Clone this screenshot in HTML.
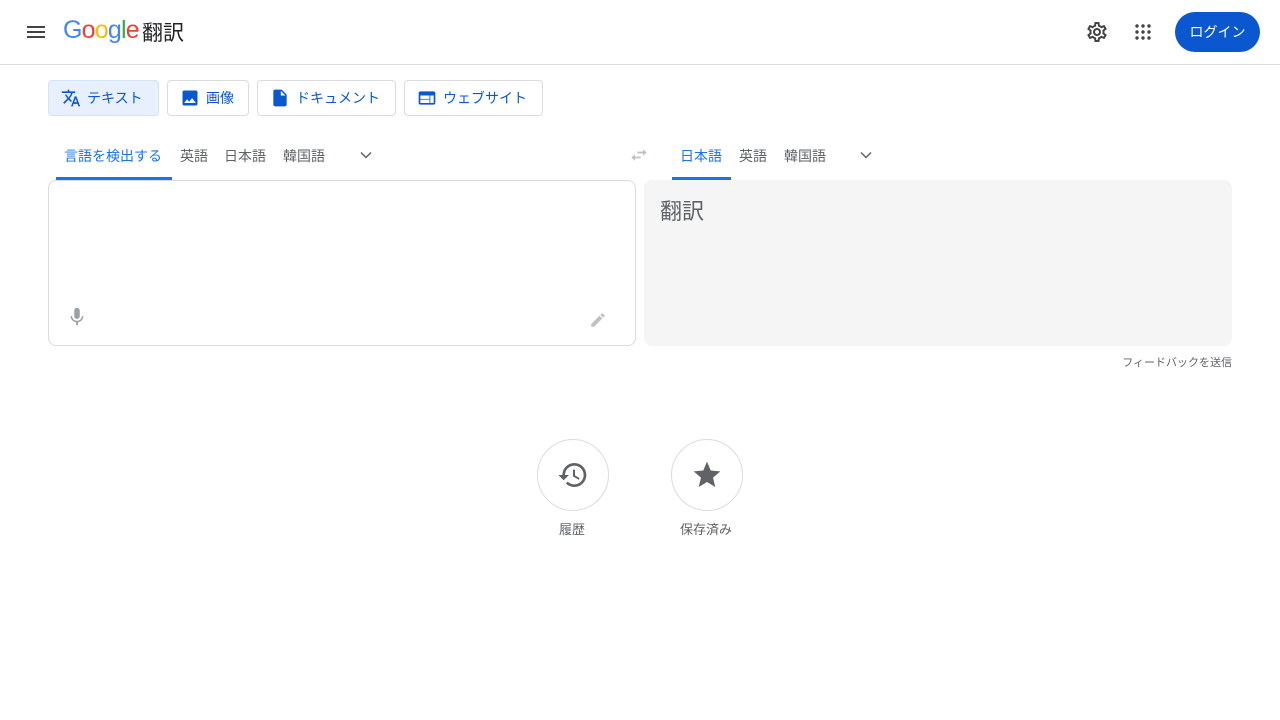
<!DOCTYPE html>
<html><head><meta charset="utf-8"><style>
*{box-sizing:border-box;margin:0;padding:0}
body{width:1280px;height:720px;background:#fff;font-family:"Liberation Sans","Noto Sans CJK JP",sans-serif;position:relative;overflow:hidden;color:#3c4043}
.abs{position:absolute}
.hdr{position:absolute;left:0;top:0;width:1280px;height:65px;border-bottom:1px solid #dadce0}
.btn{position:absolute;top:80px;height:36px;border:1px solid #dadce0;border-radius:4px;font-size:14px;color:#0b57d0;display:flex;align-items:center;padding-left:12px;gap:6px}
.tab{position:absolute;top:146px;font-size:14px;color:#5f6368}
.blue{color:#1a73e8}
</style></head><body>
<div class="hdr">
  <svg class="abs" style="left:24px;top:20px" width="24" height="24" viewBox="0 0 24 24"><path d="M3 18h18v-2H3v2zm0-5h18v-2H3v2zm0-7v2h18V6H3z" fill="#444"/></svg>
  <div class="abs" style="left:63px;top:16px;font-size:25px;letter-spacing:-0.8px;font-family:'Liberation Sans',sans-serif"><span style="color:#4285f4">G</span><span style="color:#ea4335">o</span><span style="color:#fbbc05">o</span><span style="color:#4285f4">g</span><span style="color:#34a853">l</span><span style="color:#ea4335">e</span></div>
  <div class="abs" style="left:142px;top:17px;font-size:21px;color:#202124">翻訳</div>
  <svg class="abs" style="left:1085px;top:20px" width="24" height="24" viewBox="0 0 24 24"><path fill="#444" d="M19.43 12.98c.04-.32.07-.64.07-.98 0-.34-.03-.66-.07-.98l2.11-1.65c.19-.15.24-.42.12-.64l-2-3.46a.5.5 0 0 0-.61-.22l-2.49 1c-.52-.4-1.08-.73-1.690-.98l-.38-2.65A.49.49 0 0 0 14 2h-4c-.25 0-.46.18-.49.42l-.38 2.65c-.61.25-1.17.59-1.69.98l-2.49-1a.57.57 0 0 0-.18-.03c-.17 0-.34.09-.43.25l-2 3.46c-.13.22-.07.49.12.64l2.11 1.65c-.04.32-.07.65-.07.98s.03.66.07.98l-2.11 1.65c-.19.15-.24.42-.12.64l2 3.46a.5.5 0 0 0 .61.22l2.49-1c.52.4 1.08.73 1.69.98l.38 2.65c.03.24.24.42.49.42h4c.25 0 .46-.18.49-.42l.38-2.65c.61-.25 1.17-.59 1.69-.98l2.49 1c.06.02.12.03.18.03.17 0 .34-.09.43-.25l2-3.46c.12-.22.07-.49-.12-.64l-2.11-1.65zm-1.98-1.71c.04.31.05.52.05.73 0 .21-.02.43-.05.73l-.14 1.13.89.7 1.08.84-.7 1.21-1.27-.51-1.04-.42-.9.68c-.43.32-.84.56-1.25.73l-1.06.43-.16 1.13-.2 1.35h-1.4l-.19-1.35-.16-1.13-1.06-.43c-.43-.18-.83-.41-1.23-.71l-.91-.7-1.06.43-1.27.51-.7-1.21 1.08-.84.89-.7-.14-1.13c-.03-.31-.05-.54-.05-.74s.02-.43.05-.73l.14-1.13-.89-.7-1.08-.84.7-1.21 1.27.51 1.04.42.9-.68c.43-.32.84-.56 1.25-.73l1.06-.43.16-1.13.2-1.35h1.39l.19 1.35.16 1.13 1.06.43c.43.18.83.41 1.23.71l.91.7 1.06-.43 1.27-.51.7 1.21-1.07.85-.89.7.14 1.13zM12 8c-2.21 0-4 1.790-4 4s1.79 4 4 4 4-1.79 4-4-1.79-4-4-4zm0 6c-1.1 0-2-.9-2-2s.9-2 2-2 2 .9 2 2-.9 2-2 2z"/></svg>
  <svg class="abs" style="left:1131px;top:20px" width="24" height="24" viewBox="0 0 24 24" fill="#444"><circle cx="6" cy="6" r="1.7"/><circle cx="12" cy="6" r="1.7"/><circle cx="18" cy="6" r="1.7"/><circle cx="6" cy="12" r="1.7"/><circle cx="12" cy="12" r="1.7"/><circle cx="18" cy="12" r="1.7"/><circle cx="6" cy="18" r="1.7"/><circle cx="12" cy="18" r="1.7"/><circle cx="18" cy="18" r="1.7"/></svg>
  <div class="abs" style="left:1175px;top:12px;width:85px;height:40px;border-radius:20px;background:#0b57d0;color:#fff;font-size:14px;display:flex;align-items:center;justify-content:center">ログイン</div>
</div>

<div class="btn" style="left:48px;width:111px;background:#e8f0fe;border-color:#d2e3fc">
<svg width="20" height="20" viewBox="0 0 24 24"><path fill="#0b57d0" d="M12.87 15.07l-2.54-2.51.03-.03A17.5 17.5 0 0 0 14.07 6H17V4h-7V2H8v2H1v1.99h11.17C11.5 7.920 10.44 9.75 9 11.35 8.07 10.32 7.3 9.19 6.69 8h-2c.73 1.63 1.73 3.17 2.98 4.56l-5.09 5.02L4 19l5-5 3.11 3.11.76-2.04zM18.5 10h-2L12 22h2l1.12-3h4.75L21 22h2l-4.5-12zm-2.62 7l1.62-4.33L19.12 17h-3.24z"/></svg>テキスト</div>
<div class="btn" style="left:167px;width:82px">
<svg width="20" height="20" viewBox="0 0 24 24"><path fill="#0b57d0" d="M21 19V5c0-1.1-.9-2-2-2H5c-1.1 0-2 .9-2 2v14c0 1.1.9 2 2 2h14c1.1 0 2-.9 2-2zM8.5 13.5l2.5 3.01L14.5 12l4.5 6H5l3.5-4.5z"/></svg>画像</div>
<div class="btn" style="left:257px;width:139px">
<svg width="20" height="20" viewBox="0 0 24 24"><path fill="#0b57d0" d="M14 2H6c-1.1 0-2 .9-2 2v16c0 1.1.9 2 2 2h12c1.1 0 2-.9 2-2V8l-6-6zm-1 7V3.5L18.5 9H13z"/></svg>ドキュメント</div>
<div class="btn" style="left:404px;width:139px">
<svg width="20" height="20" viewBox="0 0 24 24"><path fill="#0b57d0" d="M20 4H4c-1.1 0-2 .9-2 2v12c0 1.1.9 2 2 2h16c1.1 0 2-.9 2-2V6c0-1.1-.9-2-2-2zm-5 14H4v-4h11v4zm0-5H4V9h11v4zm5 5h-4V9h4v9z"/></svg>ウェブサイト</div>

<div class="tab blue" style="left:64px">言語を検出する</div>
<div class="abs" style="left:56px;top:177px;width:116px;height:3px;background:#1a73e8"></div>
<div class="tab" style="left:180px">英語</div>
<div class="tab" style="left:224px">日本語</div>
<div class="tab" style="left:283px">韓国語</div>
<svg class="abs" style="left:356px;top:145px" width="20" height="20" viewBox="0 0 24 24"><path fill="none" stroke="#5f6368" stroke-width="1.8" d="M6 9l6 6 6-6"/></svg>
<svg class="abs" style="left:629px;top:145px" width="20" height="20" viewBox="0 0 24 24"><path fill="#bdc1c6" d="M6.99 11L3 15l3.99 4v-3H14v-2H6.99v-3zM21 9l-3.99-4v3H10v2h7.01v3L21 9z"/></svg>
<div class="tab blue" style="left:680px">日本語</div>
<div class="abs" style="left:672px;top:177px;width:59px;height:3px;background:#1a73e8"></div>
<div class="tab" style="left:739px">英語</div>
<div class="tab" style="left:784px">韓国語</div>
<svg class="abs" style="left:856px;top:145px" width="20" height="20" viewBox="0 0 24 24"><path fill="none" stroke="#5f6368" stroke-width="1.8" d="M6 9l6 6 6-6"/></svg>

<div class="abs" style="left:48px;top:180px;width:588px;height:166px;border:1px solid #dadce0;border-radius:8px"></div>
<svg class="abs" style="left:66px;top:306px" width="22" height="22" viewBox="0 0 24 24"><path fill="#9aa0a6" d="M12 14c1.66 0 3-1.34 3-3V5c0-1.66-1.34-3-3-3S9 3.34 9 5v6c0 1.66 1.34 3 3 3zm5.3-3c0 3-2.54 5.1-5.3 5.1S6.7 14 6.7 11H5c0 3.41 2.72 6.23 6 6.72V21h2v-3.28c3.28-.48 6-3.3 6-6.72h-1.7z"/></svg>
<svg class="abs" style="left:589px;top:311px" width="18" height="18" viewBox="0 0 24 24"><path fill="#bdc1c6" d="M3 17.25V21h3.75L17.81 9.94l-3.75-3.75L3 17.25zM20.71 7.04a1 1 0 0 0 0-1.41l-2.34-2.34a1 1 0 0 0-1.41 0l-1.83 1.83 3.75 3.75 1.83-1.83z"/></svg>

<div class="abs" style="left:644px;top:180px;width:588px;height:166px;background:#f5f5f5;border-radius:8px"></div>
<div class="abs" style="left:660px;top:194px;font-size:22px;color:#5f6368">翻訳</div>
<div class="abs" style="right:48px;top:354px;font-size:11px;color:#5f6368">フィードバックを送信</div>

<div class="abs" style="left:537px;top:439px;width:72px;height:72px;border:1px solid #dadce0;border-radius:50%"></div>
<svg class="abs" style="left:557px;top:459px" width="32" height="32" viewBox="0 0 24 24"><path fill="#5f6368" d="M13 3a9 9 0 0 0-9 9H1l3.89 3.89.07.14L9 12H6c0-3.87 3.13-7 7-7s7 3.13 7 7-3.13 7-7 7c-1.93 0-3.68-.79-4.94-2.06l-1.42 1.42A8.95 8.95 0 0 0 13 21a9 9 0 0 0 0-18zm-1 5v5l4.28 2.54.72-1.21-3.5-2.08V8H12z"/></svg>
<div class="abs" style="left:559px;top:519px;font-size:13px;color:#5f6368">履歴</div>
<div class="abs" style="left:671px;top:439px;width:72px;height:72px;border:1px solid #dadce0;border-radius:50%"></div>
<svg class="abs" style="left:691px;top:459px" width="32" height="32" viewBox="0 0 24 24"><path fill="#5f6368" d="M12 17.27L18.18 21l-1.64-7.03L22 9.24l-7.19-.61L12 2 9.19 8.63 2 9.24l5.46 4.73L5.82 21z"/></svg>
<div class="abs" style="left:680px;top:519px;font-size:13px;color:#5f6368">保存済み</div>
</body></html>
